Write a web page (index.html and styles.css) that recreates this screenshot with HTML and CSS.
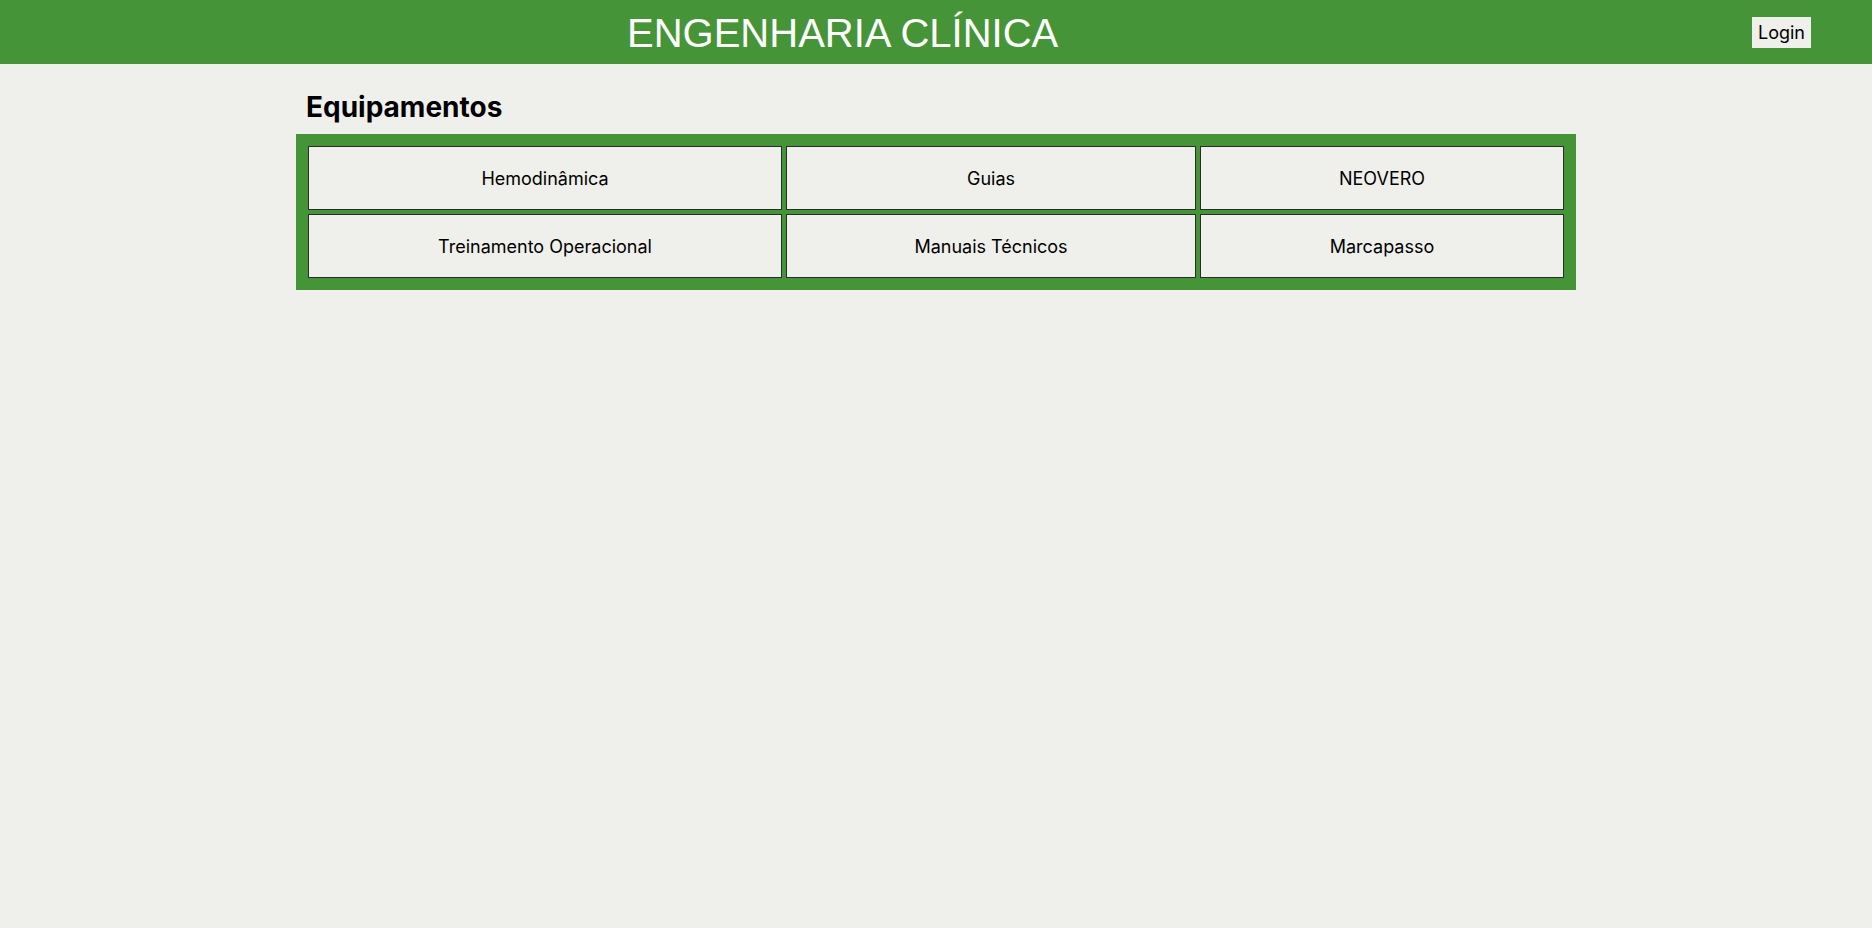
FILE: index.html
```html
<!DOCTYPE html>
<html lang="pt-BR">
<head>
<meta charset="utf-8">
<title>Engenharia Clínica</title>
<link rel="stylesheet" href="styles.css">
</head>
<body>
<header class="topbar">
  <h1 class="brand">ENGENHARIA CLÍNICA</h1>
  <button class="login-btn" type="button">Login</button>
</header>
<main class="content">
  <h2 class="section-title">Equipamentos</h2>
  <div class="grid-panel">
    <a class="cell" href="#">Hemodinâmica</a>
    <a class="cell" href="#">Guias</a>
    <a class="cell" href="#">NEOVERO</a>
    <a class="cell" href="#">Treinamento Operacional</a>
    <a class="cell" href="#">Manuais Técnicos</a>
    <a class="cell" href="#">Marcapasso</a>
  </div>
</main>
</body>
</html>
```
FILE: styles.css
```css
* { box-sizing: border-box; }

html, body {
  margin: 0;
  padding: 0;
}

body {
  background: #eff0eb;
  font-family: Inter, "Noto Sans", sans-serif;
  color: #000;
  min-height: 928px;
}

.topbar {
  height: 64px;
  background: #469438;
  display: flex;
  align-items: center;
  padding: 0 61px 0 627px;
}

.brand {
  margin: 2px 0 0 0;
  font-family: "Liberation Sans", Arial, sans-serif;
  font-weight: 400;
  font-size: 40px;
  line-height: 46px;
  color: #fff;
  letter-spacing: 0;
}

.login-btn {
  margin-left: auto;
  margin-top: 1px;
  background: #eff0eb;
  border: none;
  padding: 4px 6px;
  height: 31px;
  font-family: Inter, "Noto Sans", sans-serif;
  font-size: 18px;
  line-height: 23px;
  color: #000;
  cursor: pointer;
}

.content {
  width: 1280px;
  margin: 0 auto;
}

.section-title {
  margin: 26px 0 10px 0;
  padding-left: 10px;
  font-size: 28px;
  line-height: 34px;
  font-weight: 700;
}

.grid-panel {
  background: #469438;
  padding: 12px;
  display: grid;
  grid-template-columns: 474px 410px 364px;
  grid-auto-rows: 64px;
  gap: 4px;
}

.cell {
  display: flex;
  align-items: center;
  justify-content: center;
  border: 1px solid #2b2b2b;
  background: #eff0eb;
  color: #000;
  text-decoration: none;
  font-size: 18px;
}
```
